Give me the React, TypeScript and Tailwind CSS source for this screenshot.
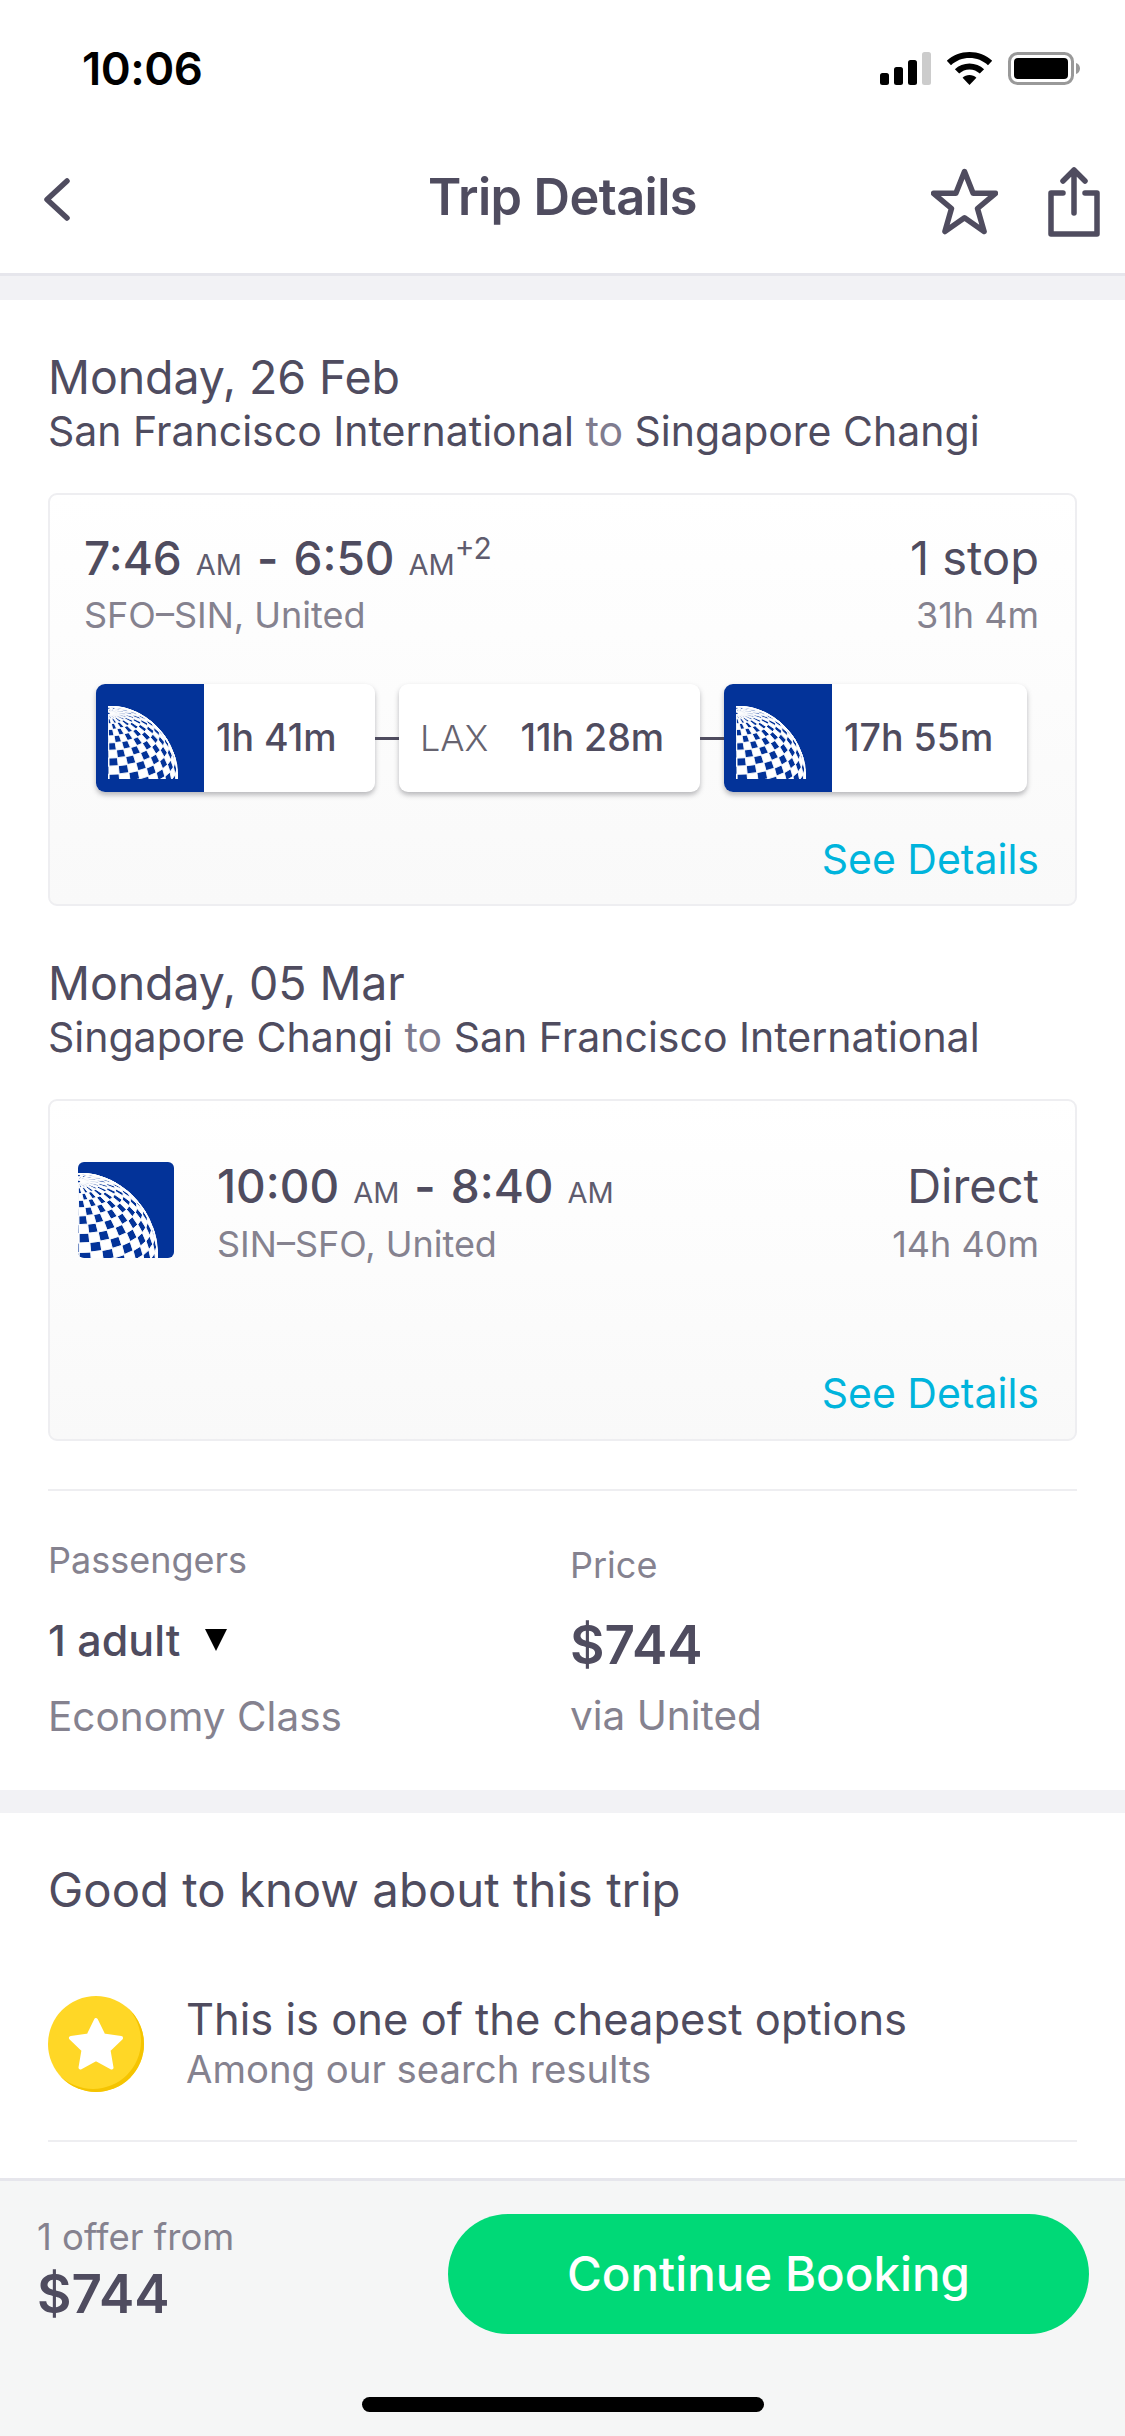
// orthographic globe tiles for the airline logo, pole tilted toward the viewer
const C = 0.9
const S = 0.436
function pt(lat: number, lon: number) {
  const la = (lat * Math.PI) / 180
  const lo = (lon * Math.PI) / 180
  let x = Math.cos(la) * Math.sin(lo)
  const y0 = Math.sin(la)
  const z0 = Math.cos(la) * Math.cos(lo)
  let y = y0 * C - z0 * S
  const z = y0 * S + z0 * C
  // pull anything behind the limb back onto the rim
  if (z < 0) {
    const n = Math.hypot(x, y) || 1
    x /= n
    y /= n
  }
  return { x: x * 100, y: 100 - y * 100, z }
}
function buildGlobe() {
  let tiles = ''
  let lines = ''
  for (let i = 0; i < 30; i++) {
    const lat1 = 88 - i * 6.5
    const lat2 = lat1 - 6.5
    for (let j = 0; j < 24; j++) {
      const lon1 = -18 + j * 9.5
      const lon2 = lon1 + 9.5
      const q = [pt(lat1, lon1), pt(lat1, lon2), pt(lat2, lon2), pt(lat2, lon1)]
      if (q.every((p) => p.z < 0)) continue
      const d = `M${q.map((p) => `${p.x.toFixed(1)} ${p.y.toFixed(1)}`).join('L')}Z`
      lines += d
      if ((i + j) % 2 === 0) tiles += d
    }
  }
  return { tiles, lines }
}
const globe = buildGlobe()

function Globe({ className }: { className: string }) {
  return (
    <svg viewBox="0 0 100 100" preserveAspectRatio="none" className={className}>
      <path d={globe.tiles} fill="#fff" />
      <path d={globe.lines} fill="none" stroke="#fff" strokeWidth="0.9" />
      <path d="M0 .8A99.2 99.2 0 0 1 99.2 100" fill="none" stroke="#fff" strokeWidth="1.4" />
    </svg>
  )
}

function Pill({ logo, children, className }: { logo?: boolean; children: React.ReactNode; className: string }) {
  return (
    <div className={`flex h-[108px] items-center overflow-hidden rounded-[9px] bg-white shadow-[0_3px_5px_rgba(60,60,70,0.35)] ${className}`}>
      {logo && (
        <div className="flex h-full w-[108px] shrink-0 items-end bg-[#033399] pb-[13px] pl-[12px]">
          <Globe className="h-[73px] w-[70px]" />
        </div>
      )}
      {children}
    </div>
  )
}

function Time({ t, sup }: { t: string; sup?: string }) {
  return (
    <span className="text-[#7f7c8f]">
      <span className="text-[46px] font-medium text-[#4f4c5f]">{t}</span>
      <span className="ml-[14px] text-[29px] text-[#5f5c6e]">AM</span>
      {sup && <span className="relative top-[-16px] text-[30px] text-[#5f5c6e]">{sup}</span>}
    </span>
  )
}

function Dash() {
  return <span className="mx-[15px] text-[46px] font-semibold text-[#4f4c5f]">-</span>
}

export default function App() {
  return (
    <div className="flex h-[2436px] w-[1125px] flex-col overflow-hidden bg-white font-['Inter',sans-serif] text-[#4f4c5f]">
      {/* status bar */}
      <div className="flex h-[136px] items-start justify-between pl-[82px] pr-[45px] pt-[44px]">
        <span className="text-[45.500px] font-semibold leading-[50px] tracking-[-0.5px] text-black">10:06</span>
        <div className="mt-[8px] flex items-center gap-[15px]">
          <svg width="51" height="33" viewBox="0 0 51 33">
            <rect x="0" y="21" width="9" height="12" rx="2.5" fill="#000" />
            <rect x="14" y="15" width="9" height="18" rx="2.5" fill="#000" />
            <rect x="28" y="8" width="9" height="25" rx="2.5" fill="#000" />
            <rect x="42" y="0" width="9" height="33" rx="2.5" fill="#ccc" />
          </svg>
          <svg width="47" height="33" viewBox="0 0 47 33">
            <path d="M23.5 0C14.8 0 6.8 3.3.8 8.8l4.2 4.4C10 8.600 16.400 6 23.500 6s13.500 2.600 18.500 7.200l4.200-4.400C40.200 3.300 32.200 0 23.500 0z" fill="#000" />
            <path d="M23.500 11.500c-5.600 0-10.800 2.100-14.600 5.700l4.300 4.400c2.700-2.500 6.400-4.100 10.300-4.100s7.600 1.600 10.300 4.100l4.300-4.400c-3.800-3.600-9-5.700-14.600-5.700z" fill="#000" />
            <path d="M23.500 23c-2.700 0-5.100 1-6.900 2.700l6.900 7.300 6.900-7.300C28.600 24 26.200 23 23.500 23z" fill="#000" />
          </svg>
          <svg width="72" height="33" viewBox="0 0 72 33">
            <rect x="1.500" y="1.500" width="63" height="30" rx="8" fill="none" stroke="#999" strokeWidth="3" />
            <rect x="6" y="6" width="54" height="21" rx="4" fill="#000" />
            <path d="M68 11c2.500.6 4 3 4 5.500s-1.500 4.900-4 5.500z" fill="#999" />
          </svg>
        </div>
      </div>

      {/* nav */}
      <div className="relative flex h-[140px] shrink-0 items-center justify-center border-b-[3px] border-[#e6e6ec]">
        <svg className="absolute left-[43px] top-[42px]" width="27" height="43" viewBox="0 0 27 43" fill="none" stroke="#4f4c5f" strokeWidth="5.500" strokeLinecap="round" strokeLinejoin="round">
          <path d="M24 3L4 21.500 24 40" />
        </svg>
        <h1 className="mb-[15px] text-[50.500px] font-semibold tracking-[-0.6px]">Trip Details</h1>
        <svg className="absolute left-[931px] top-[32px]" width="67" height="67" viewBox="0 0 67 67" fill="none" stroke="#4f4c5f" strokeWidth="5.500" strokeLinejoin="round">
          <path d="M33.500 3.500l8.600 21.800h22.400l-18 15.200 6.600 23-19.600-13.800-19.600 13.800 6.600-23-18-15.200h22.400z" />
        </svg>
        <svg className="absolute left-[1048px] top-[31px]" width="52" height="70" viewBox="0 0 52 70" fill="none" stroke="#4f4c5f" strokeWidth="5.500" strokeLinecap="round" strokeLinejoin="round">
          <path d="M26 3v43M15 14L26 3l11 11" />
          <path d="M15 26H3v41h46V26H37" />
        </svg>
      </div>

      <div className="min-h-0 flex-1 overflow-hidden bg-[#f2f2f5] pt-[24px]">
        <div className="bg-white px-[48px] pb-[48px]">
          {/* outbound */}
          <div className="pt-[52px] text-[46.500px] leading-[50px] tracking-[-0.1px]">Monday, 26 Feb</div>
          <div className="mt-[4px] text-[41px] leading-[50px]">
            San Francisco International <span className="text-[#7f7c8f]">to</span> Singapore Changi
          </div>

          <div className="mt-[37px] h-[413px] rounded-[9px] border-2 border-[#eeeef1] bg-gradient-to-b from-white to-[#f9f9f9] pl-[34px] pr-[36px]">
            <div className="flex items-start justify-between pt-[33px]">
              <div className="leading-[60px]">
                <Time t="7:46" />
                <Dash />
                <Time t="6:50" sup="+2" />
              </div>
              <div className="text-[47px] leading-[60px]">1 stop</div>
            </div>
            <div className="mt-[-6px] flex justify-between text-[36px] leading-[44px] text-[#85828f]">
              <span>SFO–SIN, United</span>
              <span>31h 4m</span>
            </div>
            <div className="mt-[47px] flex items-center pl-[12px]">
              <Pill logo className="w-[279px]">
                <span className="ml-[12px] text-[37.500px] font-medium">1h 41m</span>
              </Pill>
              <div className="h-[3px] w-[24px] bg-[#4f4c5f]" />
              <Pill className="w-[301px] pl-[21px]">
                <span className="text-[36px] font-light text-[#66636f]">LAX</span>
                <span className="ml-[32px] text-[37.500px] font-medium">11h 28m</span>
              </Pill>
              <div className="h-[3px] w-[24px] bg-[#4f4c5f]" />
              <Pill logo className="w-[303px]">
                <span className="ml-[12px] text-[37.500px] font-medium">17h 55m</span>
              </Pill>
            </div>
            <div className="mt-[42px] text-right text-[41px] leading-[50px] text-[#00b4dc]">See Details</div>
          </div>

          {/* return */}
          <div className="mt-[52px] text-[46.500px] leading-[50px] tracking-[-0.1px]">Monday, 05 Mar</div>
          <div className="mt-[4px] text-[41px] leading-[50px]">
            Singapore Changi <span className="text-[#7f7c8f]">to</span> San Francisco International
          </div>

          <div className="mt-[37px] h-[342px] rounded-[9px] border-2 border-[#eeeef1] bg-gradient-to-b from-white to-[#f9f9f9] pl-[28px] pr-[36px]">
            <div className="flex pt-[61px]">
              <div className="h-[96px] w-[96px] shrink-0 overflow-hidden rounded-[6px] bg-[#033399] pt-[11px]">
                <Globe className="h-[85px] w-[80px]" />
              </div>
              <div className="ml-[43px] min-w-0 flex-1">
                <div className="mt-[-6px] flex justify-between leading-[60px]">
                  <div>
                    <Time t="10:00" />
                    <Dash />
                    <Time t="8:40" />
                  </div>
                  <div className="text-[47px]">Direct</div>
                </div>
                <div className="mt-[-5px] flex justify-between text-[36px] leading-[44px] text-[#85828f]">
                  <span>SIN–SFO, United</span>
                  <span>14h 40m</span>
                </div>
              </div>
            </div>
            <div className="mt-[102px] text-right text-[41px] leading-[50px] text-[#00b4dc]">See Details</div>
          </div>

          {/* passengers + price */}
          <div className="mt-[48px] grid grid-cols-[522px_1fr] border-t-2 border-[#eeeef1] pt-[47px]">
            <div>
              <div className="text-[36px] leading-[44px] text-[#85828f]">Passengers</div>
              <div className="mt-[36px] flex items-center text-[43px] font-medium leading-[44px]">
                1 adult
                <svg className="ml-[25px]" width="22" height="22" viewBox="0 0 22 22"><path d="M0 0h22L11 22z" fill="#000" /></svg>
              </div>
              <div className="mt-[30px] text-[40.500px] leading-[50px] text-[#85828f]">Economy Class</div>
            </div>
            <div>
              <div className="mt-[5px] text-[36px] leading-[44px] text-[#85828f]">Price</div>
              <div className="mt-[28px] text-[53px] font-semibold leading-[60px]">$744</div>
              <div className="mt-[16px] text-[40.500px] leading-[50px] text-[#85828f]">via United</div>
            </div>
          </div>
        </div>

        {/* good to know */}
        <div className="mt-[23px] bg-white px-[48px] pb-[80px]">
          <div className="pt-[47px] text-[47.300px] leading-[60px]">Good to know about this trip</div>
          <div className="mt-[74px] flex items-center">
            <div className="flex h-[96px] w-[96px] items-center justify-center rounded-full bg-[#ffd726] shadow-[inset_-3px_-3px_0_#f5c400]">
              <svg width="56" height="54" viewBox="0 0 56 54"><path d="M28 3l7.500 15.500 17.500 2.500-12.500 12 3 17.500L28 42l-15.500 8.500 3-17.500L3 21l17.500-2.500z" fill="#fff" stroke="#fff" strokeWidth="4" strokeLinejoin="round" /></svg>
            </div>
            <div className="ml-[42px]">
              <div className="text-[43.500px] leading-[50px]">This is one of the cheapest options</div>
              <div className="text-[38.300px] leading-[50px] text-[#85828f]">Among our search results</div>
            </div>
          </div>
          <div className="mt-[46px] border-t-2 border-[#eeeef1]" />
        </div>
      </div>

      {/* bottom bar */}
      <div className="relative h-[258px] shrink-0 border-t-[3px] border-[#e6e6ec] bg-[#f5f6f6] pl-[37px] pr-[36px] pt-[33px]">
        <div className="flex items-start justify-between">
          <div>
            <div className="mt-[1px] text-[36.500px] leading-[44px] text-[#85828f]">1 offer from</div>
            <div className="mt-[5px] text-[53px] font-semibold leading-[60px]">$744</div>
          </div>
          <div className="flex h-[120px] w-[641px] items-center justify-center rounded-full bg-[#00d977] text-[47.500px] font-medium text-white">Continue Booking</div>
        </div>
        <div className="absolute bottom-[24px] left-[362px] h-[15px] w-[402px] rounded-full bg-black" />
      </div>
    </div>
  )
}
